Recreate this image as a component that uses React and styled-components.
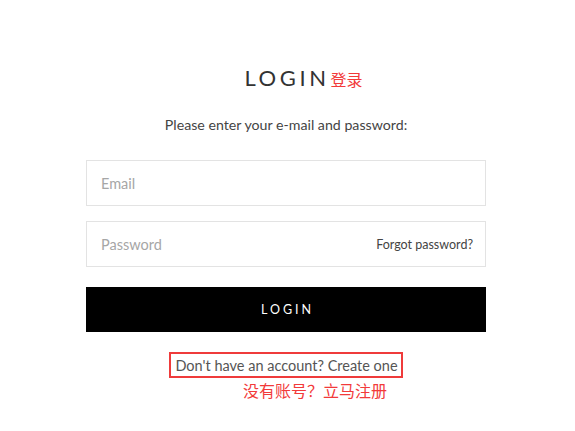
import React from "react";
import styled, { createGlobalStyle } from "styled-components";

const GlobalStyle = createGlobalStyle`
  body {
    margin: 0;
    background: #fff;
    font-family: "Lato", "Noto Sans CJK SC", sans-serif;
  }
`;

const Page = styled.div`
  width: 575px;
  height: 431px;
  display: flex;
  padding: 64px 0 0 86px;
  box-sizing: border-box;
`;

const Form = styled.div`
  width: 400px;
  display: flex;
  flex-direction: column;
  align-items: center;
`;

const Title = styled.h1`
  position: relative;
  margin: 0;
  font-weight: 400;
  font-size: 22px;
  letter-spacing: 3.6px;
  color: #333;
  line-height: 28px;
  padding-left: 2px;
`;

const Note = styled.span`
  color: #f23a3a;
  font-family: "Noto Sans CJK SC", sans-serif;
  font-size: ${(p) => p.size || 15}px;
  letter-spacing: 0;
  line-height: 1;
`;

const TitleNote = styled(Note)`
  position: absolute;
  left: 100%;
  top: 7px;
  margin-left: 1px;
  white-space: nowrap;
`;

const Subtitle = styled.p`
  margin: 24px 0 26px;
  font-size: 14.2px;
  color: #444;
  line-height: 18px;
`;

const Field = styled.div`
  width: 100%;
  height: 46px;
  box-sizing: border-box;
  border: 1px solid #e3e3e3;
  display: flex;
  align-items: center;
  justify-content: space-between;
  padding: 0 12px 0 14px;
  margin-bottom: ${(p) => p.gap || 0}px;
`;

const Placeholder = styled.span`
  font-size: 14.5px;
  color: #a6a6a6;
`;

const Forgot = styled.span`
  font-size: 12.5px;
  color: #444;
`;

const Button = styled.div`
  width: 100%;
  height: 45px;
  background: #000;
  color: #fff;
  display: flex;
  align-items: center;
  justify-content: center;
  font-size: 12.5px;
  letter-spacing: 3px;
  padding-left: 3px;
  box-sizing: border-box;
`;

const Signup = styled.div`
  margin-top: 20px;
  border: 2px solid #ef3b3b;
  padding: 3px 3px 1px 4px;
  font-size: 14.5px;
  color: #555;
  line-height: 18px;
`;

const SignupNote = styled.div`
  align-self: flex-start;
  margin: 3px 0 0 157px;
`;

export default function App() {
  return (
    <>
      <GlobalStyle />
      <Page>
        <Form>
          <Title>
            LOGIN
            <TitleNote size={16}>登录</TitleNote>
          </Title>
          <Subtitle>Please enter your e-mail and password:</Subtitle>
          <Field gap={15}>
            <Placeholder>Email</Placeholder>
          </Field>
          <Field gap={20}>
            <Placeholder>Password</Placeholder>
            <Forgot>Forgot password?</Forgot>
          </Field>
          <Button>LOGIN</Button>
          <Signup>Don't have an account? Create one</Signup>
          <SignupNote>
            <Note size={16}>没有账号？立马注册</Note>
          </SignupNote>
        </Form>
      </Page>
    </>
  );
}
